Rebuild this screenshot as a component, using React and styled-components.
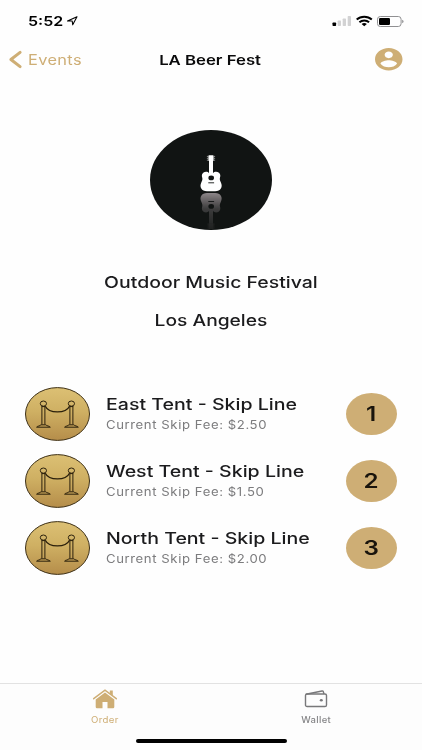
import React from "react";
import styled, { createGlobalStyle } from "styled-components";

const GOLD = "#ceae75";
const INK = "#1b1b1d";

const GlobalStyle = createGlobalStyle`
  * { box-sizing: border-box; }
  html, body { margin: 0; padding: 0; background: #fefefe; }
  body { font-family: Inter, "Liberation Sans", sans-serif; overflow: hidden; }
`;

const Screen = styled.div`
  width: 422px;
  height: 750px;
  display: flex;
  flex-direction: column;
  background: #fefefe;
  color: ${INK};
  overflow: hidden;
`;

const Wide = styled.span`
  display: inline-block;
  white-space: nowrap;
  transform: scaleX(${(p) => p.$x || 1.2});
  transform-origin: ${(p) => p.$from || "left"} center;
`;

const StatusBar = styled.div`
  height: 42px;
  display: flex;
  align-items: center;
  padding: 0 18px 0 28px;
  color: #000;
  flex: none;
`;

const Time = styled.div`
  width: 38px;
  font-size: 13px;
  font-weight: 600;
  line-height: 16px;
`;

const StatusIcons = styled.div`
  margin-left: auto;
  display: flex;
  align-items: center;
  gap: 5px;
`;

const Icon = styled.svg`
  display: block;
  flex: none;
  overflow: visible;
`;

const NavBar = styled.header`
  height: 34px;
  display: grid;
  grid-template-columns: 1fr auto 1fr;
  align-items: center;
  padding: 0 20px 0 9px;
  flex: none;
`;

const Back = styled.div`
  display: flex;
  align-items: center;
  gap: 6px;
  font-size: 14px;
  letter-spacing: 0.3px;
  color: ${GOLD};
`;

const NavTitle = styled.h1`
  margin: 1px 0 0 9px;
  font-size: 13.5px;
  line-height: 18px;
  font-weight: 600;
  color: #0b0b0c;
`;

const Account = styled.div`
  display: flex;
  justify-content: flex-end;
`;

const Hero = styled.section`
  display: flex;
  flex-direction: column;
  align-items: center;
  padding-top: 54px;
  flex: none;
`;

const HeroTitle = styled.div`
  margin-top: ${(p) => p.$gap}px;
  height: 22px;
  line-height: 22px;
  font-size: 16px;
  font-weight: 500;
`;

const List = styled.ul`
  list-style: none;
  margin: 49.5px 0 0;
  padding: 0 25px 0 25px;
  flex: none;
`;

const Row = styled.li`
  height: 67px;
  display: flex;
  align-items: center;
`;

const RowText = styled.div`
  margin-left: 16px;
  flex: 1;
  display: flex;
  flex-direction: column;
  align-items: flex-start;
`;

const RowTitle = styled.div`
  font-size: 16px;
  line-height: 20px;
  font-weight: 500;
`;

const RowFee = styled.div`
  font-size: 11.5px;
  line-height: 18px;
  margin-top: 2px;
  padding-bottom: 1px;
  letter-spacing: 0.5px;
  color: #7c7c7e;
`;

const Badge = styled.div`
  width: 51px;
  height: 42px;
  border-radius: 50%;
  background: ${GOLD};
  display: flex;
  align-items: center;
  justify-content: center;
  font-size: 19.5px;
  font-weight: 600;
  color: #19140c;
`;

const TabBar = styled.nav`
  margin-top: auto;
  height: 67px;
  border-top: 1px solid #e2e2e2;
  background: #fdfdfd;
  display: flex;
  flex-direction: column;
  align-items: center;
  flex: none;
`;

const Tabs = styled.div`
  width: 100%;
  padding-right: 0.5px;
  display: grid;
  grid-template-columns: 1fr 1fr;
  height: 55px;
`;

const Tab = styled.div`
  display: flex;
  flex-direction: column;
  align-items: center;
  padding-top: 5px;
  gap: 4px;
  font-size: 9px;
  line-height: 14px;
  letter-spacing: 0.3px;
  font-weight: ${(p) => (p.$active ? 400 : 500)};
  color: ${(p) => (p.$active ? GOLD : "#858587")};
`;

const HomeIndicator = styled.div`
  width: 151px;
  height: 4px;
  border-radius: 2px;
  background: #000;
`;

function GuitarShape() {
  return (
    <g>
      <rect x="58.4" y="25.3" width="5.2" height="5.8" rx="0.6" />
      <path d="M56.900 26.400h1M56.900 28.300h1M56.900 30.200h1M64.100 26.400h1M64.100 28.300h1M64.100 30.200h1" stroke="currentColor" strokeWidth="0.6" />
      <rect x="59" y="30.800" width="4" height="14" />
      <path d="M59 43.200c-1-1.600-3.800-1.900-5.800-.4-1.700 1.400-1.500 3.400-.9 5.200.4 1.400-.3 2.900-1 4.500-2.200 4.600.3 8.800 5.700 8.800h8.200c5.400 0 7.900-4.200 5.700-8.800-.7-1.600-1.400-3.100-1-4.500.6-1.800.8-3.800-.9-5.200-2-1.500-4.800-1.200-6 .4-.9 1-3.100 1-4 0Z" />
      <ellipse cx="61.200" cy="47.900" rx="2.800" ry="2.300" fill="#111413" />
      <path d="M58.300 52.800h5.800" stroke="#111413" strokeWidth="0.900" />
    </g>
  );
}

function GuitarLogo() {
  return (
    <Icon width="122" height="100" viewBox="0 0 122 100">
      <defs>
        <linearGradient id="fade" x1="0" y1="63" x2="0" y2="98" gradientUnits="userSpaceOnUse">
          <stop offset="0" stopColor="#fff" stopOpacity="0.62" />
          <stop offset="0.45" stopColor="#fff" stopOpacity="0.22" />
          <stop offset="1" stopColor="#fff" stopOpacity="0.08" />
        </linearGradient>
        <mask id="reflection" maskUnits="userSpaceOnUse" x="45" y="62" width="32" height="38">
          <rect x="45" y="62" width="32" height="38" fill="url(#fade)" />
        </mask>
      </defs>
      <ellipse cx="61" cy="50" rx="61" ry="50" fill="#111413" />
      <g fill="#fff" color="#fff"><GuitarShape /></g>
      <g mask="url(#reflection)">
        <g fill="#d9cdd2" color="#d9cdd2" transform="matrix(1 0 0 -1 0 124.3)"><GuitarShape /></g>
      </g>
    </Icon>
  );
}

function RopeIcon({ id }) {
  return (
    <Icon width="65" height="54" viewBox="0 0 65 54">
      <defs>
        <linearGradient id={id} x1="0" y1="0" x2="0" y2="1">
          <stop offset="0" stopColor="#dcc074" />
          <stop offset="0.45" stopColor="#cfb063" />
          <stop offset="1" stopColor="#b58d4a" />
        </linearGradient>
      </defs>
      <ellipse cx="32.5" cy="27" rx="32" ry="26.4" fill={`url(#${id})`} stroke="#3e3118" strokeWidth="1" />
      <g fill="none" stroke="#2b200c" strokeWidth="1" transform="translate(-0.1 -0.6)">
        <ellipse cx="18.5" cy="17.2" rx="3.1" ry="2.6" />
        <ellipse cx="46.500" cy="17.2" rx="3.1" ry="2.6" />
        <path d="M16.600 20.200h3.800M44.600 20.200h3.800M17 20v18M20 20v18M45 20v18M48 20v18" />
        <path d="M16 38.400h5M44 38.400h5M16 38.400c-.7 1.400-3.500 1-4.300 2.400h13.700c-.8-1.400-3.700-1-4.400-2.400M44 38.400c-.7 1.400-3.500 1-4.300 2.400h13.700c-.8-1.400-3.700-1-4.400-2.400" />
        <path d="M20.400 19.800C24 27.400 41 27.400 44.600 19.800" strokeWidth="1.3" />
      </g>
    </Icon>
  );
}

const events = [
  { n: 1, title: "East Tent - Skip Line", fee: "$2.50" },
  { n: 2, title: "West Tent - Skip Line", fee: "$1.50" },
  { n: 3, title: "North Tent - Skip Line", fee: "$2.00" },
];

export default function App() {
  return (
    <Screen>
      <GlobalStyle />
      <StatusBar>
        <Time><Wide $x={1.23}>5:52</Wide></Time>
        <Icon width="12" height="10" viewBox="0 0 12 10">
          <path d="M1.500 5 11 .8 6.700 8.800 6.200 5Z" fill="none" stroke="#000" strokeWidth="1.100" strokeLinejoin="round" />
        </Icon>
        <StatusIcons>
          <Icon width="19" height="10" viewBox="0 0 19 10">
            <rect x="0.500" y="6.500" width="3.600" height="3.500" rx="0.700" />
            <g fill="#d2d2d3">
              <rect x="5.700" y="4.600" width="3.300" height="5.400" rx="0.700" />
              <rect x="10.700" y="2.500" width="3.300" height="7.500" rx="0.700" />
              <rect x="15.700" y="0" width="3.300" height="10" rx="0.700" />
            </g>
          </Icon>
          <Icon width="16" height="10" viewBox="0 0 16 10">
            <g fill="none" stroke="#000" strokeWidth="2">
              <path d="M.7 3.500C4.800-.2 11.700-.2 15.800 3.500" />
              <path d="M3.400 6.200C6.100 3.800 10.400 3.800 13.100 6.200" />
            </g>
            <path d="M5.600 8c1.600-1.300 3.700-1.300 5.300 0L8.250 10.300Z" />
          </Icon>
          <Icon width="27" height="11" viewBox="0 0 27 11">
            <rect x="0.500" y="0.500" width="23.600" height="10" rx="2.800" fill="none" stroke="#909092" />
            <rect x="2" y="2" width="11" height="7" rx="1.200" />
            <path d="M25.300 3.800c1.600.5 1.600 2.900 0 3.400Z" fill="#77777a" />
          </Icon>
        </StatusIcons>
      </StatusBar>
      <NavBar>
        <Back>
          <Icon width="13" height="17" viewBox="0 0 13 17">
            <path d="M11.100 1.400 1.900 8.500l9.200 7.100" fill="none" stroke={GOLD} strokeWidth="3" strokeLinecap="round" strokeLinejoin="round" />
          </Icon>
          <Wide $x={1.17}>Events</Wide>
        </Back>
        <NavTitle><Wide $x={1.24} $from="center">LA Beer Fest</Wide></NavTitle>
        <Account>
          <Icon width="27.500" height="22.500" viewBox="2 2 20 20" preserveAspectRatio="none">
            <path fill={GOLD} d="M12 2C6.480 2 2 6.480 2 12s4.480 10 10 10 10-4.480 10-10S17.520 2 12 2zm0 3c1.660 0 3 1.340 3 3s-1.340 3-3 3-3-1.340-3-3 1.340-3 3-3zm0 14.200c-2.500 0-4.710-1.280-6-3.220.03-1.990 4-3.080 6-3.080 1.990 0 5.970 1.090 6 3.080-1.290 1.940-3.500 3.220-6 3.220z" />
          </Icon>
        </Account>
      </NavBar>
      <Hero>
        <GuitarLogo />
        <HeroTitle $gap={41}><Wide $x={1.215} $from="center">Outdoor Music Festival</Wide></HeroTitle>
        <HeroTitle $gap={16}><Wide $from="center">Los Angeles</Wide></HeroTitle>
      </Hero>
      <List>
        {events.map((e) => (
          <Row key={e.n}>
            <RopeIcon id={`gold-${e.n}`} />
            <RowText>
              <RowTitle><Wide $x={1.222}>{e.title}</Wide></RowTitle>
              <RowFee><Wide $x={1.145}>Current Skip Fee: {e.fee}</Wide></RowFee>
            </RowText>
            <Badge><Wide $x={1.24} $from="center">{e.n}</Wide></Badge>
          </Row>
        ))}
      </List>
      <TabBar>
        <Tabs>
          <Tab $active>
            <Icon width="24" height="20" viewBox="0 0 24 20">
              <path d="M.7 9.700 12 1.200l11.300 8.500" fill="none" stroke={GOLD} strokeWidth="1.500" strokeLinecap="round" />
              <path d="M16.800 1.600h3v5.300l-3-2.300Z" fill={GOLD} />
              <path d="M12 3.400 2.700 10.400v7.600q0 1.200 1.300 1.200h5.500v-6.200h5v6.200H20q1.300 0 1.300-1.200v-7.600Z" fill={GOLD} />
            </Icon>
            <Wide $x={1.07} $from="center">Order</Wide>
          </Tab>
          <Tab>
            <Icon width="24" height="20" viewBox="0 0 24 20">
              <g fill="none" stroke="#78787a" strokeWidth="1.400" strokeLinejoin="round">
                <rect x="1.500" y="5" width="21" height="12.500" rx="1.600" />
                <path d="M2 5.200 18 2q1-.2 1.300.6l.7 2.400" />
              </g>
              <ellipse cx="17.300" cy="11.200" rx="1.500" ry="1.300" fill="#78787a" />
            </Icon>
            <Wide $x={1.05} $from="center">Wallet</Wide>
          </Tab>
        </Tabs>
        <HomeIndicator />
      </TabBar>
    </Screen>
  );
}
